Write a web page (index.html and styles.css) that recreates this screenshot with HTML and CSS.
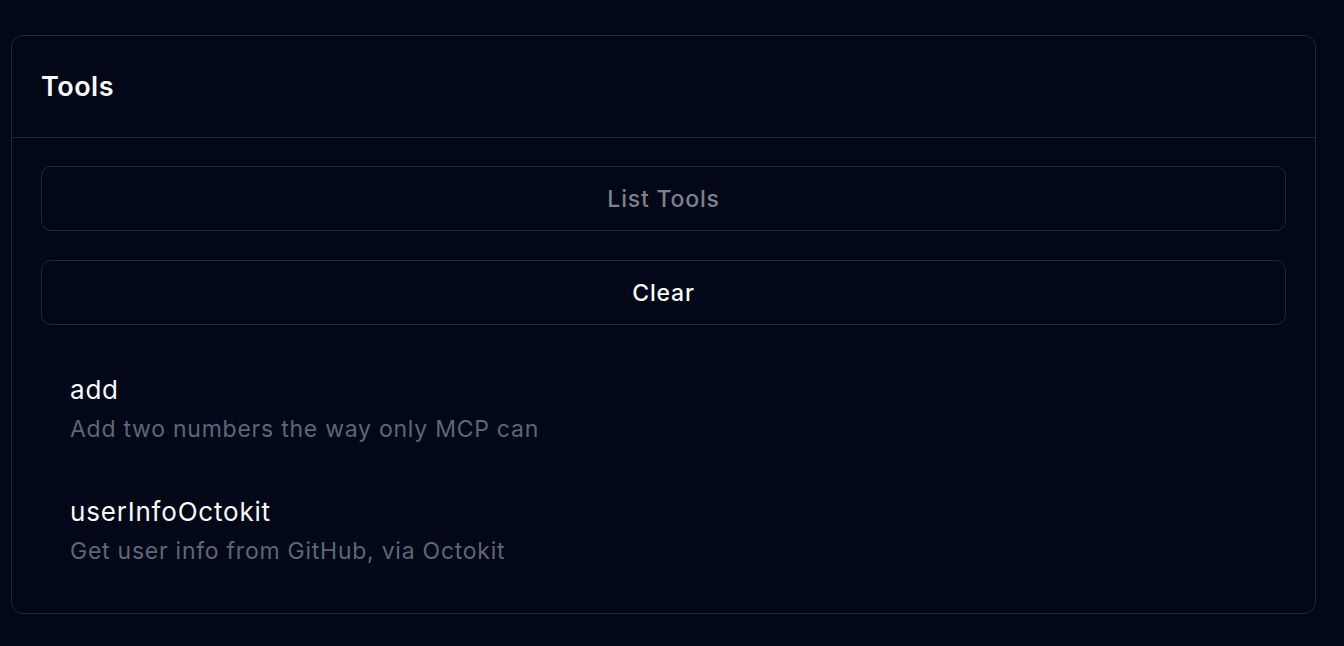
FILE: index.html
```html
<!DOCTYPE html>
<html lang="en">
<head>
  <meta charset="UTF-8">
  <meta name="viewport" content="width=device-width, initial-scale=1.0">
  <title>Tools</title>
  <link rel="stylesheet" href="styles.css">
</head>
<body>
<div class="card">
  <div class="card-header">
    <h2>Tools</h2>
  </div>
  <div class="card-body">
    <button class="btn" disabled>List Tools</button>
    <button class="btn">Clear</button>

    <ul class="tool-list">
      <li class="tool">
        <div class="tool-name">add</div>
        <div class="tool-desc">Add two numbers the way only MCP can</div>
      </li>
      <li class="tool">
        <div class="tool-name">userInfoOctokit</div>
        <div class="tool-desc">Get user info from GitHub, via Octokit</div>
      </li>
    </ul>
  </div>
</div>
</body>
</html>
```

FILE: styles.css
```css
body { margin: 0; padding: 35px 28px 0 11px; background: #020817; font-family: Inter, "Noto Sans", sans-serif; color: #f8fafc; }
.card { border: 1px solid #1e293b; border-radius: 12px; }
.card-header { height: 101px; display: flex; align-items: center; padding: 0 29px; border-bottom: 1px solid #1e293b; }
.card-header h2 { margin: 0; font-size: 27px; font-weight: 600; letter-spacing: 0.5px; }
.card-body { padding: 28px 29px 20px; display: flex; flex-direction: column; gap: 29px; }
.btn { height: 65px; width: 100%; background: transparent; border: 1px solid #1e293b; border-radius: 10px; color: #f8fafc; font-family: inherit; font-size: 23px; font-weight: 500; letter-spacing: 0.8px; }
.btn:disabled { color: #7c818b; }
.tool-list { list-style: none; margin: -5px 0 0; padding: 0; }
.tool { padding: 23px 29px 24px; }
.tool-name { font-size: 26px; line-height: 36px; letter-spacing: 0.8px; }
.tool-desc { margin-top: 3px; font-size: 23px; line-height: 36px; letter-spacing: 0.75px; color: #5d6677; }
```
